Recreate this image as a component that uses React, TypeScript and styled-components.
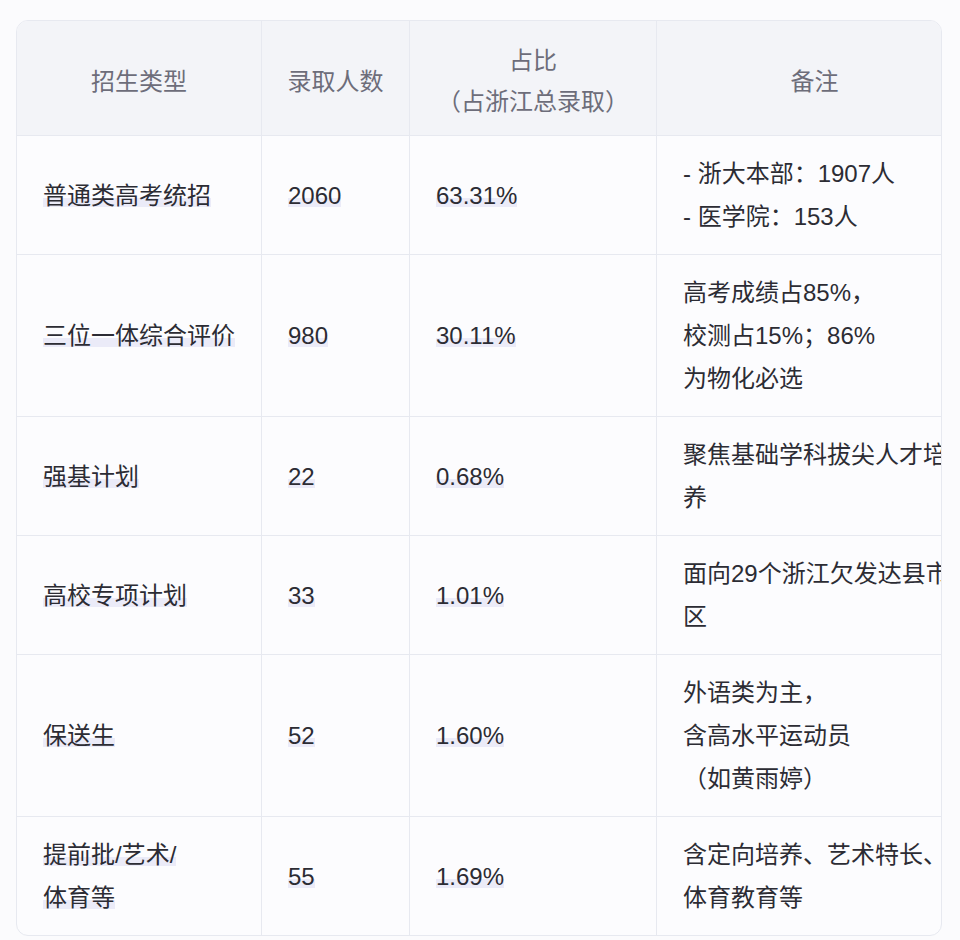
import React from 'react';
import styled, { createGlobalStyle } from 'styled-components';

const GlobalStyle = createGlobalStyle`
  html, body {
    margin: 0;
    padding: 0;
    background: #fbfbfd;
  }
  body {
    font-family: 'Liberation Sans', 'Noto Sans CJK SC', sans-serif;
  }
`;

const Page = styled.div`
  width: 960px;
  height: 940px;
  padding: 20px 18px 0 16px;
  box-sizing: border-box;
  overflow: hidden;
`;

const TableFrame = styled.div`
  width: 926px;
  border: 1px solid #e7e9f0;
  border-radius: 12px;
  overflow: hidden;
  box-sizing: border-box;
  background: #fcfcfe;
`;

const Table = styled.table`
  width: 956px;
  table-layout: fixed;
  border-collapse: separate;
  border-spacing: 0;
  font-size: 24px;
`;

const HeadCell = styled.th`
  background: #f3f4f8;
  color: #6d6d7a;
  font-weight: 400;
  line-height: 41px;
  padding: 19px 10px 13px;
  text-align: center;
  vertical-align: middle;
  border-right: 1px solid #e7e9f0;
  border-bottom: 1px solid #e7e9f0;
  white-space: nowrap;
`;

const Cell = styled.td`
  color: #2c2c34;
  line-height: 43px;
  padding: 16px 10px 16px 26px;
  vertical-align: middle;
  border-right: 1px solid #e7e9f0;
  border-bottom: 1px solid #e7e9f0;
  white-space: nowrap;
  overflow: hidden;
  tr:last-child > & {
    border-bottom: none;
  }
`;

const Marked = styled.span`
  background: linear-gradient(to bottom, transparent 58%, #ebebf8 58%, #ebebf8 92%, transparent 92%);
`;

interface Row {
  type: string[];
  count: string;
  ratio: string;
  note: string[];
}

const rows: Row[] = [
  { type: ['普通类高考统招'], count: '2060', ratio: '63.31%', note: ['- 浙大本部：1907人', '- 医学院：153人'] },
  { type: ['三位一体综合评价'], count: '980', ratio: '30.11%', note: ['高考成绩占85%，', '校测占15%；86%', '为物化必选'] },
  { type: ['强基计划'], count: '22', ratio: '0.68%', note: ['聚焦基础学科拔尖人才培', '养'] },
  { type: ['高校专项计划'], count: '33', ratio: '1.01%', note: ['面向29个浙江欠发达县市', '区'] },
  { type: ['保送生'], count: '52', ratio: '1.60%', note: ['外语类为主，', '含高水平运动员', '（如黄雨婷）'] },
  { type: ['提前批/艺术/', '体育等'], count: '55', ratio: '1.69%', note: ['含定向培养、艺术特长、', '体育教育等'] },
];

function Lines({ lines, mark }: { lines: string[]; mark?: boolean }): JSX.Element {
  return (
    <>
      {lines.map((line, i) => (
        <React.Fragment key={i}>
          {mark ? <Marked>{line}</Marked> : line}
          {i < lines.length - 1 && <br />}
        </React.Fragment>
      ))}
    </>
  );
}

export default function App(): JSX.Element {
  return (
    <Page>
      <GlobalStyle />
      <TableFrame>
        <Table>
          <colgroup>
            <col style={{ width: 245 }} />
            <col style={{ width: 148 }} />
            <col style={{ width: 247 }} />
            <col style={{ width: 316 }} />
          </colgroup>
          <thead>
            <tr>
              <HeadCell>招生类型</HeadCell>
              <HeadCell>录取人数</HeadCell>
              <HeadCell>
                占比
                <br />
                （占浙江总录取）
              </HeadCell>
              <HeadCell>备注</HeadCell>
            </tr>
          </thead>
          <tbody>
            {rows.map((row) => (
              <tr key={row.count}>
                <Cell>
                  <Lines lines={row.type} mark />
                </Cell>
                <Cell>
                  <Marked>{row.count}</Marked>
                </Cell>
                <Cell>
                  <Marked>{row.ratio}</Marked>
                </Cell>
                <Cell>
                  <Lines lines={row.note} />
                </Cell>
              </tr>
            ))}
          </tbody>
        </Table>
      </TableFrame>
    </Page>
  );
}
